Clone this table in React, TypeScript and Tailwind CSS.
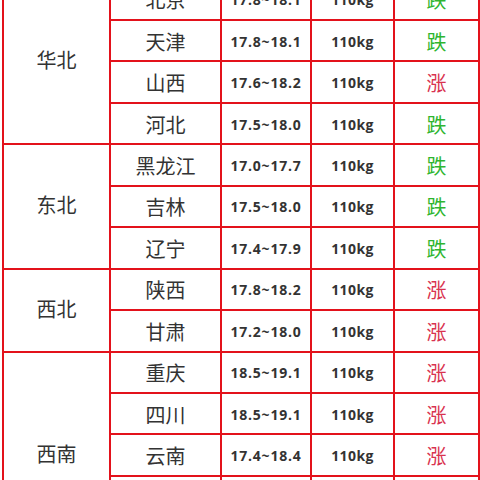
const regions = [
  {
    name: '华北',
    rows: [
      { city: '北京', price: '17.8~18.1', trend: '跌' },
      { city: '天津', price: '17.8~18.1', trend: '跌' },
      { city: '山西', price: '17.6~18.2', trend: '涨' },
      { city: '河北', price: '17.5~18.0', trend: '跌' },
    ],
  },
  {
    name: '东北',
    rows: [
      { city: '黑龙江', price: '17.0~17.7', trend: '跌' },
      { city: '吉林', price: '17.5~18.0', trend: '跌' },
      { city: '辽宁', price: '17.4~17.9', trend: '跌' },
    ],
  },
  {
    name: '西北',
    rows: [
      { city: '陕西', price: '17.8~18.2', trend: '涨' },
      { city: '甘肃', price: '17.2~18.0', trend: '涨' },
    ],
  },
  {
    name: '西南',
    rows: [
      { city: '重庆', price: '18.5~19.1', trend: '涨' },
      { city: '四川', price: '18.5~19.1', trend: '涨' },
      { city: '云南', price: '17.4~18.4', trend: '涨' },
      { city: '贵州', price: '17.6~18.5', trend: '涨' },
      { city: '广西', price: '17.5~18.3', trend: '涨' },
    ],
  },
];

const spans: Record<number, string> = {
  2: 'row-span-2',
  3: 'row-span-3',
  4: 'row-span-4',
  5: 'row-span-5',
};

export default function App() {
  return (
    <div
      className="h-[480px] w-[480px] overflow-hidden bg-white text-[#333]"
      style={{ fontFamily: '"Noto Sans CJK SC", sans-serif' }}
    >
      <div className="ml-[2px] -mt-[22.45px] grid w-fit grid-cols-[105px_109px_88px_81px_83px] auto-rows-[39.45px] gap-[2px] bg-[#e3121b] p-[2px]">
        {regions.map((region) => [
          <div
            key={region.name}
            className={`${spans[region.rows.length]} col-start-1 flex items-center justify-center bg-white pb-[3px] text-[20px]`}
          >
            {region.name}
          </div>,
          ...region.rows.flatMap((row) => [
            <div key={row.city + 'c'} className="col-start-2 flex items-center justify-center bg-white pt-[2px] text-[20px]">
              {row.city}
            </div>,
            <div
              key={row.city + 'p'}
              className="flex items-center justify-center bg-white pt-[1px] text-[14px] font-bold tracking-[0.8px]"
              style={{ fontFamily: '"Open Sans", sans-serif' }}
            >
              {row.price}
            </div>,
            <div
              key={row.city + 'w'}
              className="flex items-center justify-center bg-white pt-[1px] text-[14px] font-bold tracking-[0.4px]"
              style={{ fontFamily: '"Open Sans", sans-serif' }}
            >
              110kg
            </div>,
            <div
              key={row.city + 't'}
              className={
                row.trend === '跌'
                  ? 'flex items-center justify-center bg-white pt-[2px] text-[20px] text-[#2fb52f]'
                  : 'flex items-center justify-center bg-white pt-[2px] text-[20px] text-[#d93350]'
              }
            >
              {row.trend}
            </div>,
          ]),
        ])}
      </div>
    </div>
  );
}
